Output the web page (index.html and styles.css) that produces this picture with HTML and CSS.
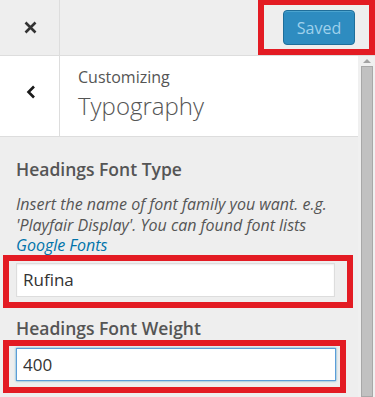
FILE: index.html
```html
<!DOCTYPE html>
<html lang="en">
<head>
  <meta charset="UTF-8">
  <title>Customizing Typography</title>
  <link rel="stylesheet" href="styles.css">
</head>
<body>

<div class="customizer">

  <!-- Top bar -->
  <div class="topbar">
    <div class="close">
      <svg width="13" height="13" viewBox="0 0 13 13">
        <path d="M1.5 1.5 L11.5 11.5 M11.5 1.5 L1.5 11.5" stroke="#333" stroke-width="2.6" fill="none"/>
      </svg>
    </div>
    <button class="save" disabled>Saved</button>
  </div>

  <div class="main">
    <div class="panel">
      <!-- Section header -->
      <div class="panel-header">
        <div class="back">
          <svg width="10" height="14" viewBox="0 0 10 14">
            <polyline points="8,1.5 2.5,7 8,12.5" stroke="#1a1a1a" stroke-width="2.6" fill="none"/>
          </svg>
        </div>
        <div class="title">
          <span class="crumb">Customizing</span>
          <span class="name">Typography</span>
        </div>
      </div>

      <!-- Controls -->
      <div class="content">
        <label class="field-title">Headings Font Type</label>
        <p class="desc">Insert the name of font family you want. e.g.<br>'Playfair Display'. You can found font lists<br><a href="#">Google Fonts</a></p>
        <input type="text" class="field" value="Rufina">

        <label class="field-title second">Headings Font Weight</label>
        <input type="text" class="field focus" value="400">
      </div>
    </div>

    <div class="scrollbar">
      <div class="arrow"></div>
      <div class="thumb"></div>
    </div>
  </div>

  <!-- red annotation boxes -->
  <div class="mark mark-save"></div>
  <div class="mark mark-type"></div>
  <div class="mark mark-weight"></div>

</div>

</body>
</html>
```

FILE: styles.css
```css
body {
  margin: 0;
  font-family: "Open Sans", "Noto Sans", sans-serif;
  color: #555;
  background: #eee;
}
.customizer {
  position: relative;
  width: 375px;
  height: 397px;
  overflow: hidden;
}
.topbar {
  height: 56px;
  box-sizing: border-box;
  background: #eee;
  border-bottom: 1px solid #ddd;
  display: flex;
  align-items: center;
  justify-content: space-between;
}
.close {
  width: 60px;
  height: 100%;
  border-right: 1px solid #ddd;
  display: flex;
  align-items: center;
  justify-content: center;
  box-sizing: border-box;
}
.close svg {
  margin: 0 0 1px 2px;
}
.save {
  margin-right: 20px;
  width: 72px;
  height: 35px;
  padding: 0;
  font-family: "Open Sans", sans-serif;
  font-size: 16px;
  color: #9fd1ec;
  background: #2e8cc0;
  border: 1px solid #1f6e9a;
  border-radius: 4px;
  box-shadow: inset 0 1px 0 rgba(120,200,230,0.4);
}
.main {
  display: flex;
  height: 341px;
}
.panel {
  width: 358px;
}
.panel-header {
  height: 81px;
  box-sizing: border-box;
  background: #fff;
  border-bottom: 1px solid #ddd;
  display: flex;
}
.back {
  width: 60px;
  border-right: 1px solid #ddd;
  box-sizing: border-box;
  display: flex;
  align-items: center;
  justify-content: center;
}
.back svg {
  margin: 0 0 8px 2px;
}
.title {
  padding: 11px 0 0 18px;
  display: flex;
  flex-direction: column;
}
.crumb {
  font-size: 16px;
  line-height: 20px;
  color: #555;
}
.name {
  font-size: 24px;
  font-weight: 300;
  line-height: 38px;
  color: #555;
}
.content {
  padding: 20px 0 0 16px;
}
.field-title {
  display: block;
  font-size: 17.5px;
  font-weight: 600;
  line-height: 24px;
  color: #555;
}
.field-title.second {
  margin-top: 19px;
}
.desc {
  margin: 13px 0 7px;
  font-size: 16px;
  font-style: italic;
  line-height: 20.5px;
  color: #555;
  white-space: nowrap;
}
.desc a {
  color: #0073aa;
  text-decoration: none;
}
.field {
  display: block;
  margin: 0;
  width: 319px;
  height: 34px;
  box-sizing: border-box;
  padding: 0 6px;
  font-family: "Open Sans", sans-serif;
  font-size: 17px;
  color: #333;
  background: #fff;
  border: 1px solid #ddd;
  box-shadow: inset 0 1px 2px rgba(0,0,0,0.07);
}
.content .second + .field {
  margin-top: 8px;
}
.field.focus {
  width: 320px;
  height: 33px;
  border-color: #5b9dd9;
  box-shadow: 0 0 2px rgba(30,140,190,0.8);
}
.scrollbar {
  width: 17px;
  background: #f0f0f0;
  display: flex;
  flex-direction: column;
  align-items: center;
}
.arrow {
  margin-top: 3px;
  width: 0;
  height: 0;
  border-left: 4px solid transparent;
  border-right: 4px solid transparent;
  border-bottom: 4px solid #a3a3a3;
}
.thumb {
  margin-top: 3px;
  width: 12px;
  flex: 1;
  box-sizing: border-box;
  background: #c1c1c1;
  border: 1px solid #a8a8a8;
}
.mark {
  position: absolute;
  border: 6px solid #e31b23;
  box-sizing: border-box;
}
.mark-save {
  left: 258px;
  top: -1px;
  width: 117px;
  height: 56px;
}
.mark-type {
  left: 3px;
  top: 255px;
  width: 350px;
  height: 53px;
}
.mark-weight {
  left: 3px;
  top: 340px;
  width: 343px;
  height: 53px;
}
```
